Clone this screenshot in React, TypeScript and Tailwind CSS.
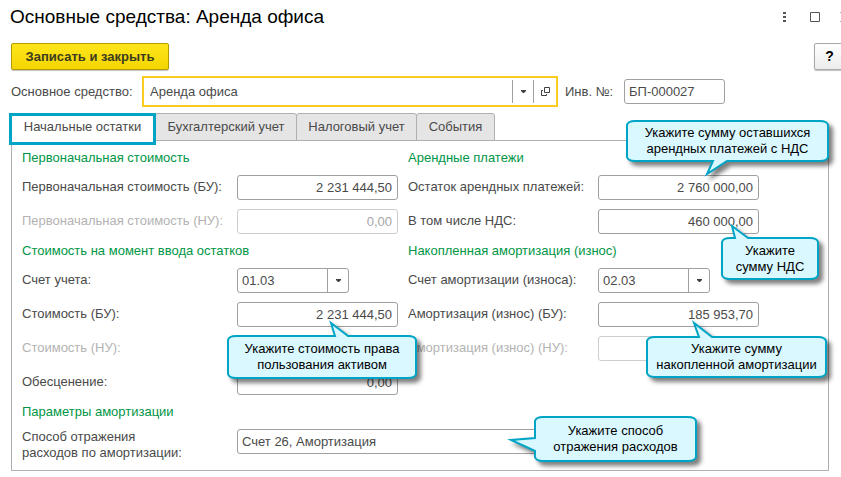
import React, { useState } from 'react';
import clsx from 'clsx';

type Tail = {
  side: 'top' | 'bottom' | 'left';
  from: number;
  to: number;
  tip: [number, number];
};

// Outline of a speech bubble, drawn clockwise from the top left corner
const bubblePath = (w: number, h: number, tail: Tail) => {
  const tip = `L${tail.tip[0]} ${tail.tip[1]}`;
  return [
    'M1 5Q2 1 9 1',
    tail.side === 'top' ? `H${tail.from}${tip}L${tail.to} 1` : '',
    `H${w - 9}Q${w - 2} 1 ${w - 1} 5`,
    `V${h - 5}Q${w - 2} ${h - 1} ${w - 9} ${h - 1}`,
    tail.side === 'bottom' ? `H${tail.to}${tip}L${tail.from} ${h - 1}` : '',
    `H9Q2 ${h - 1} 1 ${h - 5}`,
    tail.side === 'left' ? `V${tail.to}${tip}L1 ${tail.from}` : '',
    'Z',
  ].join('');
};

function Callout({
  width,
  height,
  tail,
  className,
  lines,
}: {
  width: number;
  height: number;
  tail: Tail;
  className: string;
  lines: string[];
}) {
  return (
    <div
      role="note"
      style={{ width, height }}
      className={clsx('absolute z-20 flex flex-col items-center justify-center text-black', className)}
    >
      <svg
        width={width}
        height={height}
        className="absolute inset-0 overflow-visible drop-shadow-[4px_4px_2px_rgba(0,0,0,0.5)]"
        aria-hidden="true"
      >
        <path d={bubblePath(width, height, tail)} fill="#d9f8ff" stroke="#00a5c6" strokeWidth="2" />
      </svg>
      {lines.map((line) => (
        <span key={line} className="relative leading-4 whitespace-nowrap">
          {line}
        </span>
      ))}
    </div>
  );
}

function Arrow() {
  return (
    <svg width="5" height="3" viewBox="0 0 5 3" aria-hidden="true">
      <path d="M0 0h5v1L3 3H2L0 1z" fill="#404040" />
    </svg>
  );
}

function Row({
  id,
  label,
  wide,
  disabled,
  children,
}: {
  id: string;
  label: string;
  wide?: boolean;
  disabled?: boolean;
  children: React.ReactNode;
}) {
  return (
    <div className="flex h-6 items-center">
      <label
        htmlFor={id}
        className={clsx(
          'shrink-0 leading-4 whitespace-nowrap',
          wide ? 'w-[215px]' : 'w-[190px]',
          disabled && 'text-[#b3b3b3]',
        )}
      >
        {label}
      </label>
      <div className="relative h-6">{children}</div>
    </div>
  );
}

function AmountInput({ id, value, disabled }: { id: string; value: string; disabled?: boolean }) {
  return (
    <input
      id={id}
      defaultValue={value}
      disabled={disabled}
      className="block h-[25px] w-[161px] rounded-[3px] border border-[#a0a0a0] bg-white px-[5px] text-right disabled:border-[#cdcdcd] disabled:text-[#a6a6a6]"
    />
  );
}

function AccountSelect({ id, value }: { id: string; value: string }) {
  return (
    <div className="relative">
      <select
        id={id}
        defaultValue={value}
        className="block h-[25px] w-28 appearance-none rounded-[3px] border border-[#a0a0a0] bg-white pl-1"
      >
        <option>{value}</option>
      </select>
      <span className="pointer-events-none absolute inset-y-0 right-0 flex w-[22px] items-center justify-center border-l border-[#a0a0a0]">
        <Arrow />
      </span>
    </div>
  );
}

function Section({ title, children }: { title: string; children: React.ReactNode }) {
  return (
    <section>
      <h2 className="flex h-[34px] items-center whitespace-nowrap text-[#009646]">{title}</h2>
      <div className="flex flex-col gap-[10px]">{children}</div>
    </section>
  );
}

const tabs = ['Начальные остатки', 'Бухгалтерский учет', 'Налоговый учет', 'События'];
const tabWidths = ['w-[147px]', 'w-[142px]', 'w-[121px]', 'w-[79px]'];

export default function App() {
  const [activeTab, setActiveTab] = useState(tabs[0]);

  return (
    <div className="overflow-hidden bg-white pb-1.5 font-['Liberation_Sans',Arial,sans-serif] text-[13px] text-[#4a4a4a]">
      <header className="-mr-[9px] flex h-[34px] items-center justify-between pl-[10px]">
        <h1 className="text-[19px] leading-6 text-black">Основные средства: Аренда офиса</h1>
        <div className="flex items-center gap-5">
          <button aria-label="Меню" className="flex w-3 justify-center">
            <svg width="3" height="11" viewBox="0 0 3 11">
              <path d="M0 0h3v2H0zM0 4h3v2H0zM0 8h3v2H0z" fill="#555" />
            </svg>
          </button>
          <button aria-label="Развернуть">
            <svg width="10" height="10" viewBox="0 0 10 10">
              <path d="M.5.5h9v9h-9z" fill="none" stroke="#555" />
            </svg>
          </button>
          <button aria-label="Закрыть">
            <svg width="10" height="10" viewBox="0 0 10 10">
              <path d="M.5.5l9 9M9.5.5l-9 9" fill="none" stroke="#555" />
            </svg>
          </button>
        </div>
      </header>

      <div className="-mr-1 flex items-center justify-between pt-[9px] pl-[11px]">
        <button className="h-[27px] w-[158px] rounded-[2px] border border-[#b39b00] bg-linear-to-b from-[#ffe61a] to-[#f3d500] font-bold text-[#3c3c1e] shadow-[0_1px_1px_rgba(0,0,0,0.25)]">
          Записать и закрыть
        </button>
        <button
          aria-label="Справка"
          className="h-[27px] w-[31px] rounded-[2px] border border-[#a8a8a8] bg-linear-to-b from-white to-[#ececec] text-[14px] font-bold text-black shadow-[0_1px_1px_rgba(0,0,0,0.25)]"
        >
          ?
        </button>
      </div>

      <div className="flex items-center pt-[6px] pl-[11px]">
        <label htmlFor="asset" className="w-[131px] shrink-0 whitespace-nowrap">
          Основное средство:
        </label>
        <div className="flex h-[31px] w-[416px] items-center border-2 border-[#fbcb20] py-[2px]">
          <div className="relative h-full grow">
            <select id="asset" className="h-full w-full appearance-none pl-[6px] outline-none">
              <option>Аренда офиса</option>
            </select>
            <span className="pointer-events-none absolute inset-y-0 right-0 flex w-[21px] items-center justify-center border-l border-[#a0a0a0]">
              <Arrow />
            </span>
          </div>
          <button
            aria-label="Открыть"
            className="flex h-full w-[23px] items-center justify-center border-l border-[#a0a0a0]"
          >
            <svg width="9" height="9" viewBox="0 0 9 9">
              <path d="M3.5.5h5v5h-5zM2 3.5H.5v5h5V7" fill="none" stroke="#404040" />
            </svg>
          </button>
        </div>
        <label htmlFor="inv" className="ml-[7px] w-[59px] whitespace-nowrap">
          Инв. №:
        </label>
        <input
          id="inv"
          defaultValue="БП-000027"
          className="h-[25px] w-[101px] rounded-[3px] border border-[#a0a0a0] pl-1"
        />
      </div>

      <nav role="tablist" className="flex h-[33px] items-start pt-[6px] pl-[9px]">
        {tabs.map((tab, i) => (
          <button
            key={tab}
            role="tab"
            aria-selected={tab === activeTab}
            onClick={() => setActiveTab(tab)}
            className={clsx(
              'shrink-0 whitespace-nowrap',
              tabWidths[i],
              tab === activeTab
                ? 'relative z-10 h-8 border-3 border-[#00a5c6] bg-white pb-1'
                : '-ml-px h-7 rounded-t-[3px] border border-[#b0b0b0] bg-[#e5e5e5] first:ml-0',
            )}
          >
            {tab}
          </button>
        ))}
      </nav>

      <main className="mr-3 ml-[11px] border border-[#b0b0b0] pb-[9px] pl-[10px]">
        <div className="flex gap-[10px]">
          <div className="flex flex-col gap-px">
            <Section title="Первоначальная стоимость">
              <Row wide id="cost-bu" label="Первоначальная стоимость (БУ):">
                <AmountInput id="cost-bu" value="2 231 444,50" />
              </Row>
              <Row wide disabled id="cost-nu" label="Первоначальная стоимость (НУ):">
                <AmountInput disabled id="cost-nu" value="0,00" />
              </Row>
            </Section>
            <Section title="Стоимость на момент ввода остатков">
              <Row wide id="account" label="Счет учета:">
                <AccountSelect id="account" value="01.03" />
              </Row>
              <Row wide id="value-bu" label="Стоимость (БУ):">
                <AmountInput id="value-bu" value="2 231 444,50" />
                <Callout
                  width={190}
                  height={44}
                  tail={{ side: 'top', from: 108, to: 121, tip: [104, -12] }}
                  className="top-[33px] -left-[10px]"
                  lines={['Укажите стоимость права', 'пользования активом']}
                />
              </Row>
              <Row wide disabled id="value-nu" label="Стоимость (НУ):">
                <AmountInput disabled id="value-nu" value="0,00" />
              </Row>
              <Row wide id="impairment" label="Обесценение:">
                <AmountInput id="impairment" value="0,00" />
              </Row>
            </Section>
          </div>

          <div className="flex flex-col gap-px">
            <Section title="Арендные платежи">
              <Row id="rent" label="Остаток арендных платежей:">
                <AmountInput id="rent" value="2 760 000,00" />
                <Callout
                  width={203}
                  height={42}
                  tail={{ side: 'bottom', from: 87, to: 101, tip: [81, 54] }}
                  className="bottom-[37px] left-[28px]"
                  lines={['Укажите сумму оставшихся', 'арендных платежей с НДС']}
                />
              </Row>
              <Row id="vat" label="В том числе НДС:">
                <AmountInput id="vat" value="460 000,00" />
                <Callout
                  width={98}
                  height={43}
                  tail={{ side: 'top', from: 14, to: 27, tip: [11, -11] }}
                  className="top-[28px] left-[123px]"
                  lines={['Укажите', 'сумму НДС']}
                />
              </Row>
            </Section>
            <Section title="Накопленная амортизация (износ)">
              <Row id="dep-account" label="Счет амортизации (износа):">
                <AccountSelect id="dep-account" value="02.03" />
              </Row>
              <Row id="dep-bu" label="Амортизация (износ) (БУ):">
                <AmountInput id="dep-bu" value="185 953,70" />
                <Callout
                  width={181}
                  height={42}
                  tail={{ side: 'top', from: 53, to: 66, tip: [48, -13] }}
                  className="top-[34px] left-[48px]"
                  lines={['Укажите сумму', 'накопленной амортизации']}
                />
              </Row>
              <Row disabled id="dep-nu" label="Амортизация (износ) (НУ):">
                <AmountInput disabled id="dep-nu" value="0,00" />
              </Row>
            </Section>
          </div>
        </div>

        <div className="pt-px">
          <Section title="Параметры амортизации">
            <div className="flex items-start">
              <label htmlFor="method" className="w-[215px] shrink-0 leading-4">
                Способ отражения
                <br />
                расходов по амортизации:
              </label>
              <div className="relative">
                <input
                  id="method"
                  defaultValue="Счет 26, Амортизация"
                  className="block h-[25px] w-[400px] rounded-[3px] border border-[#a0a0a0] pl-1"
                />
                <Callout
                  width={163}
                  height={46}
                  tail={{ side: 'left', from: 22, to: 35, tip: [-23, 24] }}
                  className="-top-[13px] left-[297px]"
                  lines={['Укажите способ', 'отражения расходов']}
                />
              </div>
            </div>
          </Section>
        </div>
      </main>
    </div>
  );
}
